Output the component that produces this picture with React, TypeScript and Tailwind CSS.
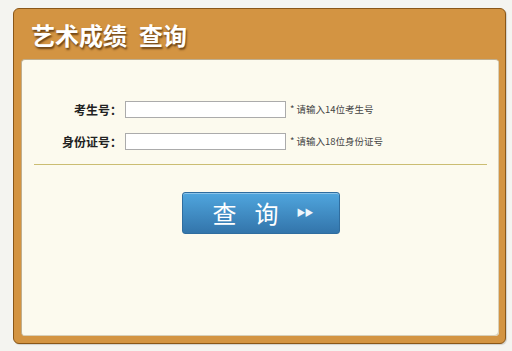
const FONT = "font-['Microsoft_YaHei','Noto_Sans_CJK_SC',sans-serif]";

function Row({ label, hint }: { label: string; hint: string }) {
  return (
    <div className="flex h-[17px] items-center">
      <label className="w-[103px] pr-[3px] text-right text-[12px] font-bold text-[#222]">
        {label}
      </label>
      <input
        type="text"
        className="h-[17px] w-[161px] border border-[#ababab] bg-white outline-none"
      />
      <span className="ml-[4px] text-[9.5px] text-[#444]">{hint}</span>
    </div>
  );
}

export default function App() {
  return (
    <div className={`h-[351px] w-[512px] bg-[#f4f4f0] pt-[8px] pl-[13px] ${FONT}`}>
      <div className="flex h-[336px] w-[493px] flex-col rounded-[6px] border border-[#8a5718] bg-[#d39442] pr-[6px] pb-[7px] pl-[7px] shadow-[1px_1px_1px_rgba(0,0,0,0.15)]">
        <div className="flex h-[50px] items-center pl-[10px] pt-[1px]">
          <h1 className="text-[24px] font-bold leading-none text-white [text-shadow:1px_2px_2px_rgba(60,30,0,0.7)]">
            艺术成绩<span className="ml-[12px]">查询</span>
          </h1>
        </div>
        <div className="flex flex-1 flex-col rounded-[4px] border-t border-l border-[#bfae8e] bg-[#fcfaee] px-[12px] pt-[41px] shadow-[inset_-1px_-1px_0_#d8cfb8]">
          <div className="-ml-[12px] flex flex-col gap-[15px]">
            <Row label="考生号：" hint="* 请输入14位考生号" />
            <Row label="身份证号：" hint="* 请输入18位身份证号" />
          </div>
          <div className="mt-[14px] h-px bg-[#cbbd72]" />
          <div className="mt-[27px] flex justify-center">
            <button
              type="button"
              className="flex h-[42px] w-[158px] items-center justify-center rounded-[3px] border border-[#2f6d9f] bg-gradient-to-b from-[#50a6de] to-[#3375ab] pl-[4px] text-white shadow-[inset_0_1px_0_rgba(255,255,255,0.35)]"
            >
              <span className="text-[24px] leading-none">查</span>
              <span className="ml-[18px] text-[24px] leading-none">询</span>
              <span className="ml-[18px] text-[9px] tracking-[-1px] text-[#eef6fc]">▶▶</span>
            </button>
          </div>
        </div>
      </div>
    </div>
  );
}
